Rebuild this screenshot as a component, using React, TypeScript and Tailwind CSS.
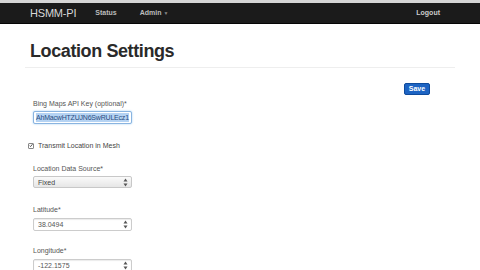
const font = { fontFamily: '"Liberation Sans", Arial, sans-serif' };

function Spinner() {
  return (
    <div className="flex flex-col items-center justify-center gap-[1px] h-full w-[6px] mr-[3px]">
      <svg width="5" height="4" viewBox="0 0 5 4">
        <path d="M0.5 3.5 L2.5 0.5 L4.5 3.5 Z" fill="#555" />
      </svg>
      <svg width="5" height="4" viewBox="0 0 5 4">
        <path d="M0.5 0.5 L2.5 3.5 L4.5 0.5 Z" fill="#555" />
      </svg>
    </div>
  );
}

function Label({ text }: { text: string }) {
  return <div className="text-[7px] leading-[9px] text-[#555]">{text}</div>;
}

function NumberInput({ value }: { value: string }) {
  return (
    <div className="mt-[4px] flex items-center justify-between w-[99px] h-[13px] border border-[#ccc] rounded-[2px] bg-white shadow-[inset_0_1px_1px_rgba(0,0,0,0.08)]">
      <span className="pl-[4px] text-[7px] leading-[9px] text-[#555]">{value}</span>
      <Spinner />
    </div>
  );
}

export default function App() {
  return (
    <div style={font} className="w-[480px] h-[270px] overflow-hidden bg-white">
      <div className="h-[3px] bg-[#d6d6d6]" />
      <nav className="h-[21px] bg-[#1b1b1b] border-b border-[#050505] flex items-center">
        <span className="ml-[30px] text-[11px] text-[#d8d8d8] tracking-[-0.2px]">HSMM-PI</span>
        <span className="ml-[19px] text-[7px] font-bold text-[#bbb]">Status</span>
        <span className="ml-[23px] text-[7px] font-bold text-[#bbb]">
          Admin <span className="text-[5px] text-[#888]">▼</span>
        </span>
        <span className="ml-auto mr-[40px] text-[7px] font-bold text-[#ccc]">Logout</span>
      </nav>

      <div className="px-[25px]">
        <h1 className="pl-[5px] pt-[15px] text-[18px] leading-[24px] font-bold tracking-[-0.4px] text-[#2a2a2a]">
          Location Settings
        </h1>
        <div className="mt-[4px] h-px bg-[#eeeeee]" />
        <div className="flex justify-end pr-[25px] mt-[15px]">
          <div className="w-[26px] h-[12px] rounded-[2px] bg-[#1d64c3] border border-[#0e4a9c] flex items-center justify-center text-[7px] font-bold text-white">
            Save
          </div>
        </div>

        <div className="pl-[8px] mt-[4px]">
          <Label text="Bing Maps API Key (optional)*" />
          <div className="mt-[3px] w-[99px] h-[13px] border border-[#8ab4e0] rounded-[2px] bg-white flex items-center px-[2px] overflow-hidden shadow-[0_0_2px_rgba(82,168,236,0.6)]">
            <span className="bg-[#b5d3f3] text-[7px] text-[#2a4c80] whitespace-nowrap leading-[9px] tracking-[-0.2px]">
              AhMacwHTZUJN6SwRULEcz1
            </span>
          </div>

          <div className="mt-[17px] -ml-[5px] flex items-center gap-[4px]">
            <div className="w-[6px] h-[6px] border border-[#888] rounded-[1px] bg-white flex items-center justify-center">
              <svg width="5" height="5" viewBox="0 0 5 5">
                <path d="M0.8 2.6 L2 3.8 L4.4 0.8" stroke="#333" strokeWidth="1" fill="none" />
              </svg>
            </div>
            <span className="text-[7px] leading-[9px] text-[#444]">Transmit Location in Mesh</span>
          </div>

          <div className="mt-[14px]">
            <Label text="Location Data Source*" />
            <div className="mt-[3px] flex items-center justify-between w-[99px] h-[12px] border border-[#c8c8c8] rounded-[2px] bg-gradient-to-b from-[#fafafa] to-[#e6e6e6]">
              <span className="pl-[4px] text-[7px] leading-[9px] text-[#444]">Fixed</span>
              <Spinner />
            </div>
          </div>

          <div className="mt-[17px]">
            <Label text="Latitude*" />
            <NumberInput value="38.0494" />
          </div>

          <div className="mt-[15px]">
            <Label text="Longitude*" />
            <NumberInput value="-122.1575" />
          </div>
        </div>
      </div>
    </div>
  );
}
